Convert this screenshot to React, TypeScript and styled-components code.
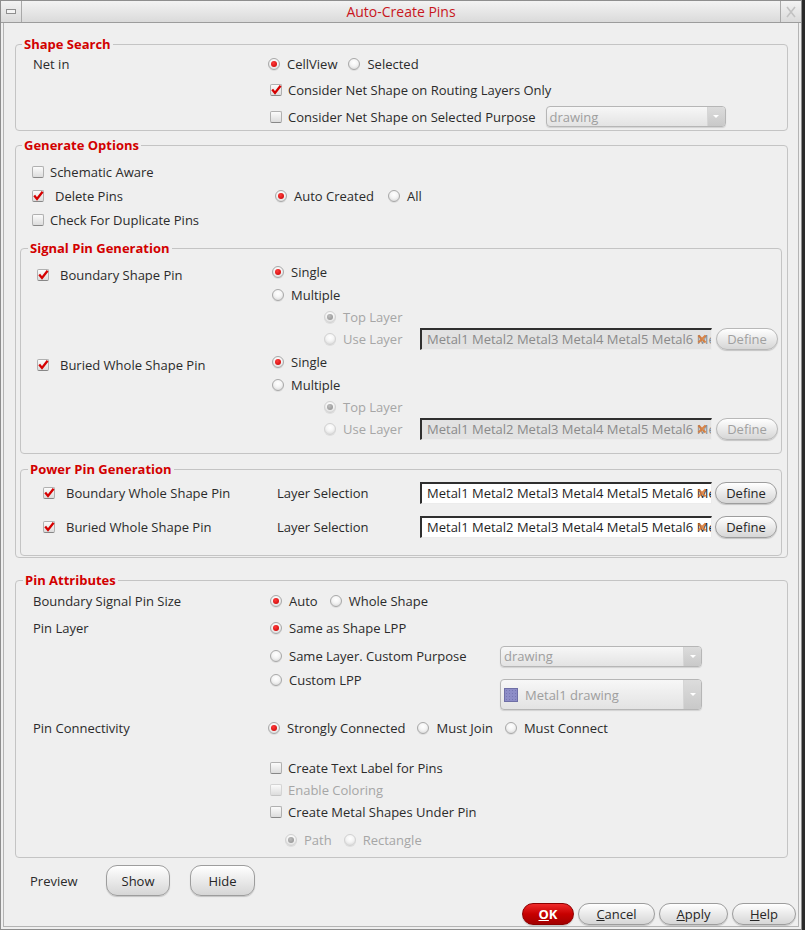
import React from 'react'
import styled, { createGlobalStyle } from 'styled-components'

const GlobalStyle = createGlobalStyle`
  html, body {
    margin: 0;
    padding: 0;
    background: #2a2a2a;
  }
  body {
    font-family: "Open Sans", "Noto Sans", "DejaVu Sans", sans-serif;
    font-size: 13px;
    color: #2b2b2b;
  }
  #root {
    width: 805px;
    height: 930px;
  }
`

const Window = styled.div`
  width: 802px;
  height: 930px;
  box-sizing: border-box;
  background: #efefef;
  border: 1px solid #8e8e8e;
  display: flex;
  flex-direction: column;
`

const TitleBar = styled.div`
  height: 21px;
  flex: none;
  display: flex;
  background: linear-gradient(#f3f3f3, #dadada);
  border-bottom: 1px solid #9c9c9c;
`

const TitleCell = styled.div<{ $side: 'left' | 'right' }>`
  width: 20px;
  display: flex;
  align-items: center;
  justify-content: center;
  border-${(p) => (p.$side === 'left' ? 'right' : 'left')}: 1px solid #a9a9a9;
`

const Title = styled.div`
  flex: 1;
  text-align: center;
  color: #c8161d;
  font-size: 14px;
  line-height: 21px;
`

const Body = styled.div`
  flex: 1;
  margin: 0 2px 2px;
  border: 1px solid #b4b4b4;
  border-top: none;
  display: flex;
  flex-direction: column;
`

const Content = styled.div`
  padding: 14px 10px 0 11px;
`

const Group = styled.fieldset<{ $mt: number; $pb: number; $pl?: number; $pr?: number }>`
  margin: ${(p) => p.$mt}px 0 0;
  padding: 0 ${(p) => p.$pr ?? 0}px ${(p) => p.$pb}px ${(p) => p.$pl ?? 0}px;
  border: 1px solid #c4c4c4;
  border-radius: 4px;
  min-width: 0;
`

const Legend = styled.legend<{ $indent: number }>`
  margin-left: ${(p) => p.$indent}px;
  padding: 0 2px;
  line-height: 14px;
  font-weight: 700;
  color: #d20000;
`

const Row = styled.div<{ $h: number; $pl?: number; $top?: boolean }>`
  display: flex;
  align-items: ${(p) => (p.$top ? 'flex-start' : 'center')};
  height: ${(p) => p.$h}px;
  padding-left: ${(p) => p.$pl ?? 0}px;
  white-space: nowrap;
`

const Col = styled.div<{ $w: number }>`
  width: ${(p) => p.$w}px;
  flex: none;
  display: flex;
  align-items: center;
`

const Options = styled.div<{ $gap?: number }>`
  display: flex;
  align-items: center;
  gap: ${(p) => p.$gap ?? 12}px;
`

const OptionLabel = styled.label<{ $disabled?: boolean; $w?: number; $h?: number; $gap?: number }>`
  display: inline-flex;
  align-items: center;
  gap: ${(p) => p.$gap ?? 7}px;
  ${(p) => (p.$w ? `width: ${p.$w}px;` : '')}
  ${(p) => (p.$h ? `height: ${p.$h}px;` : '')}
  flex: none;
  color: ${(p) => (p.$disabled ? '#a6a6a6' : '#2b2b2b')};
`

const RadioMark = styled.span<{ $on?: boolean; $disabled?: boolean }>`
  position: relative;
  width: 12px;
  height: 12px;
  flex: none;
  box-sizing: border-box;
  border-radius: 50%;
  border: 1px solid ${(p) => (p.$disabled ? '#d2d2d2' : '#a8a8a8')};
  background: radial-gradient(circle at 50% 35%, #ffffff 0%, #f4f4f4 45%, #d0d0d0 100%);
  box-shadow: 0 1px 0 rgba(0, 0, 0, 0.07);
  &::after {
    content: '';
    display: ${(p) => (p.$on ? 'block' : 'none')};
    position: absolute;
    left: 2px;
    top: 2px;
    width: 6px;
    height: 6px;
    border-radius: 50%;
    background: ${(p) =>
      p.$disabled ? 'radial-gradient(circle at 40% 35%, #bdbdbd, #8e8e8e)' : 'radial-gradient(circle at 40% 35%, #ff3a3a, #c40000)'};
  }
`

const BoxMark = styled.span<{ $disabled?: boolean }>`
  width: 12px;
  height: 12px;
  flex: none;
  box-sizing: border-box;
  display: inline-flex;
  border: 1px solid ${(p) => (p.$disabled ? '#d4d4d4' : '#b0b0b0')};
  border-bottom-color: ${(p) => (p.$disabled ? '#c4c4c4' : '#878787')};
  border-radius: 2px;
  background: linear-gradient(#fbfbfb, #dcdcdc);
  svg {
    overflow: visible;
  }
`

const LayerField = styled.div<{ $disabled?: boolean }>`
  width: 292px;
  height: 22px;
  flex: none;
  box-sizing: border-box;
  overflow: hidden;
  white-space: nowrap;
  border-top: 2px solid #2f2f2f;
  border-left: 2px solid #2f2f2f;
  border-right: 1px solid #ececec;
  border-bottom: 1px solid #ececec;
  background: ${(p) => (p.$disabled ? '#e2e2e2' : '#ffffff')};
  color: ${(p) => (p.$disabled ? '#8a8a8a' : '#1f1f1f')};
  padding-left: 5px;
  line-height: 19px;
`

const Marked = styled.span`
  position: relative;
  svg {
    position: absolute;
    left: 0;
    top: 4px;
  }
`

const PillButton = styled.button<{ $w: number; $h: number; $disabled?: boolean; $ml?: number }>`
  width: ${(p) => p.$w}px;
  height: ${(p) => p.$h}px;
  margin-left: ${(p) => p.$ml ?? 0}px;
  flex: none;
  padding: 0;
  font: inherit;
  color: ${(p) => (p.$disabled ? '#a0a0a0' : '#262626')};
  border: 1px solid ${(p) => (p.$disabled ? '#b8b8b8' : '#9d9d9d')};
  border-radius: ${(p) => Math.min(11, p.$h / 2)}px;
  background: linear-gradient(#ffffff, #ececec 45%, #d6d6d6);
  box-shadow: 0 1px 1px rgba(0, 0, 0, 0.18);
`

const OkButton = styled(PillButton)`
  color: #ffffff;
  font-weight: 700;
  border-color: #8c0000;
  background: linear-gradient(#ee2a2a, #c70000 50%, #a20000);
`

const Select = styled.div<{ $w: number; $h: number; $ml?: number; $mt?: number }>`
  width: ${(p) => p.$w}px;
  height: ${(p) => p.$h}px;
  margin-left: ${(p) => p.$ml ?? 0}px;
  margin-top: ${(p) => p.$mt ?? 0}px;
  flex: none;
  box-sizing: border-box;
  display: flex;
  border: 1px solid #b6b6b6;
  border-radius: 4px;
  background: linear-gradient(#f7f7f7, #e3e3e3);
  color: #9e9e9e;
  box-shadow: 0 1px 1px rgba(0, 0, 0, 0.12);
  overflow: hidden;
`

const SelectText = styled.span`
  flex: 1;
  display: flex;
  align-items: center;
  gap: 7px;
  padding-left: 3px;
`

const SelectArrow = styled.span`
  width: 17px;
  display: flex;
  align-items: center;
  justify-content: center;
  background: linear-gradient(#dcdcdc, #c9c9c9);
  border-left: 1px solid #d6d6d6;
  &::before {
    content: '';
    border-left: 3px solid transparent;
    border-right: 3px solid transparent;
    border-top: 3px solid #ffffff;
  }
`

const Swatch = styled.span`
  width: 14px;
  height: 14px;
  box-sizing: border-box;
  border: 1px solid #6f6fa6;
  background-color: #8d8dc7;
  background-image: radial-gradient(#7676b2 30%, transparent 31%);
  background-size: 3px 3px;
`

const VGap = styled.div<{ $h: number }>`
  height: ${(p) => p.$h}px;
`

const SignalBlock = styled.div`
  display: flex;
  padding-left: 16px;
`

const SignalLeft = styled.div`
  width: 235px;
  flex: none;
  height: 24px;
  padding-top: 6px;
  box-sizing: border-box;
  display: flex;
  align-items: center;
`

const Stack = styled.div`
  display: flex;
  flex-direction: column;
`

const PreviewRow = styled.div`
  display: flex;
  align-items: center;
  height: 31px;
  margin-top: 7px;
  padding-left: 26px;
`

const PreviewLabel = styled.span`
  width: 76px;
`

const Footer = styled.div`
  display: flex;
  justify-content: flex-end;
  gap: 4px;
  margin-top: 7px;
  padding-right: 2px;
`

const MinIcon = () => (
  <svg width="10" height="6" viewBox="0 0 10 6">
    <rect x="0.5" y="0.5" width="9" height="4" fill="#f4f4f4" stroke="#8f8f8f" />
  </svg>
)

const CloseIcon = () => (
  <svg width="10" height="12" viewBox="0 0 10 12">
    <path d="M1 1 L9 11 M9 1 L1 11" stroke="#c2c2c2" strokeWidth="1.6" fill="none" />
  </svg>
)

const Radio: React.FC<{ on?: boolean; disabled?: boolean; children: React.ReactNode }> = ({ on, disabled, children }) => (
  <OptionLabel $disabled={disabled}>
    <RadioMark $on={on} $disabled={disabled} />
    {children}
  </OptionLabel>
)

const Check: React.FC<{ on?: boolean; disabled?: boolean; gap?: number; children: React.ReactNode }> = ({
  on,
  disabled,
  gap = 6,
  children,
}) => (
  <OptionLabel $disabled={disabled} $gap={gap}>
    <BoxMark $disabled={disabled}>
      {on && (
        <svg width="10" height="10" viewBox="0 0 10 10">
          <path d="M1.2 4.6 L4 8 L9.6 0.8" stroke="#d60000" strokeWidth="2.3" fill="none" />
        </svg>
      )}
    </BoxMark>
    {children}
  </OptionLabel>
)

const Layers: React.FC<{ disabled?: boolean }> = ({ disabled }) => (
  <LayerField $disabled={disabled}>
    Metal1 Metal2 Metal3 Metal4 Metal5 Metal6{' '}
    <Marked>
      M
      <svg width="10" height="10" viewBox="0 0 10 10">
        <path d="M1.5 1.5 L8.5 8.5 M8.5 1.5 L1.5 8.5" stroke="#d9762e" strokeWidth="2" opacity="0.85" />
      </svg>
    </Marked>
    e
  </LayerField>
)

const SignalPin: React.FC<{ label: string }> = ({ label }) => (
  <SignalBlock>
    <SignalLeft>
      <Check on gap={11}>
        {label}
      </Check>
    </SignalLeft>
    <Stack>
      <Row $h={24}>
        <Radio on>Single</Radio>
      </Row>
      <Row $h={22}>
        <Radio>Multiple</Radio>
      </Row>
      <Row $h={22} $pl={52}>
        <Radio on disabled>Top Layer</Radio>
      </Row>
      <Row $h={22} $pl={52}>
        <Col $w={96}>
          <Radio disabled>Use Layer</Radio>
        </Col>
        <Layers disabled />
        <PillButton $w={62} $h={22} $ml={4} $disabled>
          Define
        </PillButton>
      </Row>
    </Stack>
  </SignalBlock>
)

const PowerPin: React.FC<{ label: string }> = ({ label }) => (
  <Row $h={34} $pl={22}>
    <Col $w={234}>
      <Check on gap={11}>
        {label}
      </Check>
    </Col>
    <Col $w={143}>Layer Selection</Col>
    <Layers />
    <PillButton $w={62} $h={22} $ml={3}>
      Define
    </PillButton>
  </Row>
)

const App: React.FC = () => (
  <>
    <GlobalStyle />
    <Window>
      <TitleBar>
        <TitleCell $side="left">
          <MinIcon />
        </TitleCell>
        <Title>Auto-Create Pins</Title>
        <TitleCell $side="right">
          <CloseIcon />
        </TitleCell>
      </TitleBar>
      <Body>
        <Content>
          <Group $mt={0} $pb={0} $pl={17}>
            <Legend $indent={-11}>Shape Search</Legend>
            <Row $h={25}>
              <Col $w={235}>Net in</Col>
              <Options $gap={11}>
                <Radio on>CellView</Radio>
                <Radio>Selected</Radio>
              </Options>
            </Row>
            <Row $h={27} $pl={237}>
              <Check on>Consider Net Shape on Routing Layers Only</Check>
            </Row>
            <Row $h={27} $pl={237}>
              <Check>Consider Net Shape on Selected Purpose</Check>
              <Select $w={180} $h={21} $ml={10}>
                <SelectText>drawing</SelectText>
                <SelectArrow />
              </Select>
            </Row>
          </Group>

          <Group $mt={7} $pb={1} $pl={4} $pr={5}>
            <Legend $indent={2}>Generate Options</Legend>
            <VGap $h={8} />
            <Row $h={24} $pl={12}>
              <Check>Schematic Aware</Check>
            </Row>
            <Row $h={24} $pl={12}>
              <Col $w={243}>
                <Check on gap={11}>
                  Delete Pins
                </Check>
              </Col>
              <Options $gap={14}>
                <Radio on>Auto Created</Radio>
                <Radio>All</Radio>
              </Options>
            </Row>
            <Row $h={24} $pl={12}>
              <Check>Check For Duplicate Pins</Check>
            </Row>

            <Group $mt={9} $pb={13}>
              <Legend $indent={7}>Signal Pin Generation</Legend>
              <VGap $h={5} />
              <SignalPin label="Boundary Shape Pin" />
              <SignalPin label="Buried Whole Shape Pin" />
            </Group>

            <Group $mt={8} $pb={11}>
              <Legend $indent={7}>Power Pin Generation</Legend>
              <PowerPin label="Boundary Whole Shape Pin" />
              <PowerPin label="Buried Whole Shape Pin" />
            </Group>
          </Group>

          <Group $mt={15} $pb={0} $pl={17}>
            <Legend $indent={-10}>Pin Attributes</Legend>
            <VGap $h={2} />
            <Row $h={24}>
              <Col $w={237}>Boundary Signal Pin Size</Col>
              <Options $gap={12}>
                <Radio on>Auto</Radio>
                <Radio>Whole Shape</Radio>
              </Options>
            </Row>
            <Row $h={30}>
              <Col $w={237}>Pin Layer</Col>
              <Radio on>Same as Shape LPP</Radio>
            </Row>
            <Row $h={26} $pl={237}>
              <OptionLabel $w={230}>
                <RadioMark />
                Same Layer. Custom Purpose
              </OptionLabel>
              <Select $w={202} $h={21}>
                <SelectText>drawing</SelectText>
                <SelectArrow />
              </Select>
            </Row>
            <Row $h={43} $pl={237} $top>
              <OptionLabel $w={230} $h={22}>
                <RadioMark />
                Custom LPP
              </OptionLabel>
              <Select $w={202} $h={31} $mt={10}>
                <SelectText>
                  <Swatch />
                  Metal1 drawing
                </SelectText>
                <SelectArrow />
              </Select>
            </Row>
            <Row $h={32}>
              <Col $w={235}>Pin Connectivity</Col>
              <Options $gap={12}>
                <Radio on>Strongly Connected</Radio>
                <Radio>Must Join</Radio>
                <Radio>Must Connect</Radio>
              </Options>
            </Row>
            <VGap $h={13} />
            <Row $h={22} $pl={237}>
              <Check>Create Text Label for Pins</Check>
            </Row>
            <Row $h={22} $pl={237}>
              <Check disabled>Enable Coloring</Check>
            </Row>
            <Row $h={22} $pl={237}>
              <Check>Create Metal Shapes Under Pin</Check>
            </Row>
            <Row $h={34} $pl={252}>
              <Options $gap={12}>
                <Radio on disabled>
                  Path
                </Radio>
                <Radio disabled>Rectangle</Radio>
              </Options>
            </Row>
          </Group>
        </Content>

        <PreviewRow>
          <PreviewLabel>Preview</PreviewLabel>
          <PillButton $w={64} $h={31}>
            Show
          </PillButton>
          <PillButton $w={65} $h={31} $ml={20}>
            Hide
          </PillButton>
        </PreviewRow>

        <Footer>
          <OkButton $w={52} $h={22}>
            <u>O</u>K
          </OkButton>
          <PillButton $w={77} $h={22}>
            <u>C</u>ancel
          </PillButton>
          <PillButton $w={69} $h={22}>
            <u>A</u>pply
          </PillButton>
          <PillButton $w={64} $h={22}>
            <u>H</u>elp
          </PillButton>
        </Footer>
      </Body>
    </Window>
  </>
)

export default App
